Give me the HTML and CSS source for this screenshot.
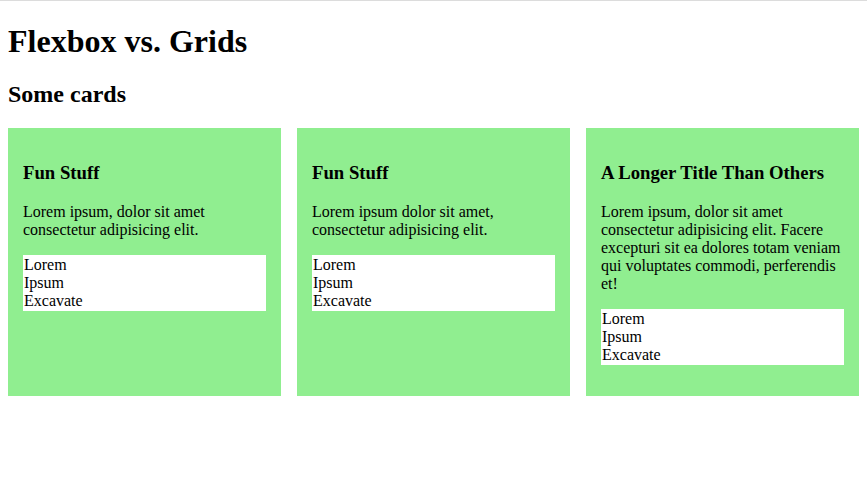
FILE: index.html
```html
<!DOCTYPE html>
<html lang="en">
<head>
<meta charset="utf-8">
<title>Flexbox vs. Grids</title>
<link rel="stylesheet" href="styles.css">
</head>
<body>
<h1 class="title">Flexbox vs. Grids</h1>
<h2>Some cards</h2>
<div class="cards">
  <div class="card">
    <h3>Fun Stuff</h3>
    <p>Lorem ipsum, dolor sit amet consectetur adipisicing elit.</p>
    <ul class="list">
      <li>Lorem</li>
      <li>Ipsum</li>
      <li>Excavate</li>
    </ul>
  </div>
  <div class="card">
    <h3>Fun Stuff</h3>
    <p>Lorem ipsum dolor sit amet, consectetur adipisicing elit.</p>
    <ul class="list">
      <li>Lorem</li>
      <li>Ipsum</li>
      <li>Excavate</li>
    </ul>
  </div>
  <div class="card">
    <h3>A Longer Title Than Others</h3>
    <p>Lorem ipsum, dolor sit amet consectetur adipisicing elit. Facere excepturi sit ea dolores totam veniam qui voluptates commodi, perferendis et!</p>
    <ul class="list">
      <li>Lorem</li>
      <li>Ipsum</li>
      <li>Excavate</li>
    </ul>
  </div>
</div>
</body>
</html>
```
FILE: styles.css
```css
html {
  border-top: 1px solid #dcdcdc;
  font-family: "Liberation Serif", "Times New Roman", serif;
  color: #000;
}
body {
  margin: 0 8px 8px;
}
.title {
  margin-top: 22px;
}
.cards {
  display: grid;
  grid-template-columns: repeat(3, 1fr);
  gap: 16px;
}
.card {
  background: #90ee90;
  padding: 15px;
}
.list {
  list-style: none;
  margin: 16px 0;
  padding: 1px 1px;
  background: #fff;
}
```
